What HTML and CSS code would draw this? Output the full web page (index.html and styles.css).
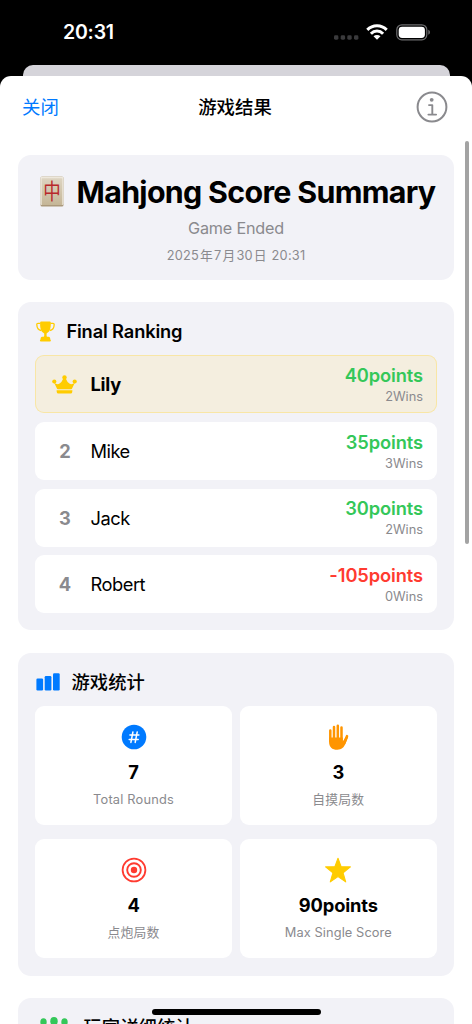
FILE: index.html
```html
<!DOCTYPE html>
<html lang="zh-CN">
<head>
<meta charset="utf-8">
<title>Mahjong Score Summary</title>
<link rel="stylesheet" href="styles.css">
</head>
<body>
<div class="phone">
  <div class="status-bar">
    <span class="clock">20:31</span>
    <div class="status-icons">
      <svg class="cellular" width="25" height="5" viewBox="0 0 25 5"><g fill="#3a3a3c"><rect x="0" y=".3" width="4.4" height="4.4" rx="1.4"/><rect x="6.7" y=".3" width="4.4" height="4.4" rx="1.4"/><rect x="13.3" y=".3" width="4.4" height="4.4" rx="1.4"/><rect x="20" y=".3" width="4.4" height="4.4" rx="1.4"/></g></svg>
      <svg class="wifi" width="22" height="16" viewBox="0 0 22 16"><g fill="none" stroke="#fff" stroke-width="3"><path d="M1.3 5.9Q5.3 1.8 11 1.8T20.7 5.9"/><path d="M4.9 9.7Q7.5 7 11 7t6.1 2.7"/></g><path d="M7.5 12.2Q9 10.9 11 10.9t3.5 1.3L11 15.8z" fill="#fff"/></svg>
      <svg class="battery" width="35" height="17" viewBox="0 0 35 17"><rect x=".8" y=".8" width="30" height="15" rx="5" fill="none" stroke="#6c6c6e" stroke-width="1.2"/><rect x="2.7" y="2.7" width="26.2" height="11.2" rx="3.4" fill="#fff"/><path d="M32.3 5.8c2.2.9 2.2 4.2 0 5z" fill="#6c6c6e"/></svg>
    </div>
  </div>
  <div class="back-sheet"></div>
  <main class="sheet">
    <header class="nav">
      <span class="close">关闭</span>
      <h1 class="nav-title">游戏结果</h1>
      <svg class="info" width="32" height="32" viewBox="0 0 32 32" fill="none" stroke="#8a8a8e"><circle cx="16" cy="16" r="14.4" stroke-width="2"/><circle cx="15.7" cy="8.8" r="1.9" fill="#8a8a8e" stroke="none"/><path d="M13 14.1h3.3v9.4M12.4 23.6h7.7" stroke-width="1.9" stroke-linecap="round" stroke-linejoin="round"/></svg>
    </header>
    <div class="content">
      <section class="card summary">
        <h2 class="title">
          <svg class="tile-icon" width="24" height="31" viewBox="0 0 24 31">
            <defs><linearGradient id="ivory" x1="0" y1="0" x2="0" y2="1"><stop offset="0" stop-color="#ddd4c1"/><stop offset="1" stop-color="#c5b697"/></linearGradient></defs>
            <rect x=".5" y=".5" width="23" height="30" rx="1.6" fill="#ab997b"/>
            <rect x=".5" y=".5" width="23" height="28.5" rx="1.6" fill="#eee8dc"/>
            <rect x="1.7" y="2.2" width="20.6" height="26.8" rx=".7" fill="url(#ivory)"/>
            <text class="tile-char" transform="translate(12 23.4) scale(.92 1.16)">中</text>
          </svg>
          <span class="title-text">Mahjong Score Summary</span>
        </h2>
        <p class="state">Game Ended</p>
        <p class="date">2025<span>年</span>7<span>月</span>30<span>日</span> 20:31</p>
      </section>

      <section class="card ranking">
        <h2 class="heading">
          <svg width="19" height="21" viewBox="0 0 19 21"><path d="M4.2 1.1Q4.3.4 5.2.4h8.5q.9 0 1 .7c.4 5.4-.5 9.8-4.1 11.3v2.5q0 .8.8.8h1.4q1.2 0 1.4 1.5v1.3q.7.1.7 1.1t-1 1h-9q-1 0-1-1t.7-1.1v-1.3q.2-1.5 1.4-1.5h1.4q.8 0 .8-.8v-2.5C4.7 10.9 3.8 6.5 4.2 1.1z" fill="#fc0"/><path d="M4.5 2.3H2Q.8 2.3.8 3.5c.1 3.6 1.5 5.6 4.5 6M14.500 2.300H17q1.200 0 1.200 1.200c-.1 3.600-1.500 5.600-4.500 6" fill="none" stroke="#fc0" stroke-width="1.3"/></svg>
          <span>Final Ranking</span>
        </h2>
        <ol class="players">
          <li class="player winner">
            <span class="rank"><svg width="25" height="19" viewBox="0 0 25 19" fill="#fc0"><circle cx="2.3" cy="6.5" r="2.1"/><circle cx="12.5" cy="2.4" r="2.2"/><circle cx="22.7" cy="6.5" r="2.1"/><path d="M2 7.5Q5.3 10.3 7.6 8.5 9.9 7 11.3 3.5h2.4Q15.1 7 17.4 8.5q2.3 1.800 5.600-1L20.300 13q-.3 1.200-1.300 1.200H6q-1 0-1.300-1.200zM4.600 15.300h15.800q-.1 3.200-1.300 3.200H5.900q-1.200 0-1.300-3.200z"/></svg></span>
            <span class="name">Lily</span>
            <span class="result"><b class="score">40points</b><small class="wins">2Wins</small></span>
          </li>
          <li class="player">
            <span class="rank">2</span><span class="name">Mike</span>
            <span class="result"><b class="score">35points</b><small class="wins">3Wins</small></span>
          </li>
          <li class="player">
            <span class="rank">3</span><span class="name">Jack</span>
            <span class="result"><b class="score">30points</b><small class="wins">2Wins</small></span>
          </li>
          <li class="player">
            <span class="rank">4</span><span class="name">Robert</span>
            <span class="result"><b class="score negative">-105points</b><small class="wins">0Wins</small></span>
          </li>
        </ol>
      </section>

      <section class="card stats">
        <h2 class="heading stats-heading">
          <svg width="24" height="18" viewBox="0 0 24 18" fill="#007aff"><rect x=".4" y="5.5" width="6.7" height="12" rx="1.2"/><rect x="8.7" y="3" width="6.7" height="14.5" rx="1.2"/><rect x="17" y=".3" width="6.7" height="17.2" rx="1.2"/></svg>
          <span>游戏统计</span>
        </h2>
        <div class="grid">
          <div class="stat">
            <svg width="26" height="26" viewBox="0 0 26 26"><circle cx="13" cy="13" r="12.3" fill="#007aff"/><path d="M11.9 8l-2 10.4M16.2 8l-2 10.4M8.9 11.1h9M8.2 15.4h9" stroke="#fff" stroke-width="1.5" stroke-linecap="round"/></svg>
            <b>7</b><span>Total Rounds</span>
          </div>
          <div class="stat">
            <svg width="26" height="26" viewBox="0 0 26 26" fill="none" stroke="#ff9500" stroke-linecap="round"><path d="M5.3 6.5V17M9 3v12M12.8 1.7V15M16.5 3.6V17" stroke-width="2.5"/><path d="M22 12.2l-2.8 7" stroke-width="2.6"/><path d="M4.05 13.5h13.7v4l3-4.6 2.4.2-2.4 6c-1.8 4.6-4.2 6.7-8.4 6.7-5.3 0-8.3-3-8.3-8.1z" fill="#ff9500" stroke="none"/></svg>
            <b>3</b><span>自摸局数</span>
          </div>
          <div class="stat">
            <svg width="26" height="26" viewBox="0 0 26 26" fill="none" stroke="#ff3b30"><circle cx="13" cy="13" r="11.4" stroke-width="1.8"/><circle cx="13" cy="13" r="6.8" stroke-width="1.9"/><circle cx="13" cy="13" r="3.2" fill="#ff3b30" stroke="none"/></svg>
            <b>4</b><span>点炮局数</span>
          </div>
          <div class="stat">
            <svg width="28" height="26" viewBox="0 0 28 26"><path d="M14 1.2l3.1 8.5 9.3.2-7.3 5.9 2.6 9.1L14 19.6l-7.7 5.3 2.6-9.1L1.6 9.9l9.3-.2z" fill="#fc0" stroke="#fc0" stroke-width="1.1" stroke-linejoin="round"/></svg>
            <b>90points</b><span class="max-label">Max Single Score</span>
          </div>
        </div>
      </section>

      <section class="card details">
        <h2 class="heading details-heading">
          <svg width="36" height="20" viewBox="0 0 36 20" fill="#34c759"><ellipse cx="7.5" cy="5" rx="3.2" ry="3.8"/><ellipse cx="18" cy="4.2" rx="3.7" ry="4.2"/><ellipse cx="28.5" cy="5" rx="3.2" ry="3.8"/><path d="M10 19c0-5 3-8.5 8-8.5s8 3.5 8 8.5zM1 17c0-4 2.5-6.5 6.5-6.5l2 .5L7 17zM35 17c0-4-2.5-6.5-6.5-6.5l-2 .5L29 17z"/></svg>
          <span>玩家详细统计</span>
        </h2>
      </section>
    </div>
  </main>
  <div class="scrollbar"></div>
  <div class="home-indicator"></div>
</div>
</body>
</html>
```
FILE: styles.css
```css
* { box-sizing: border-box; }
body { margin: 0; background: #000; font-family: Inter, "Noto Sans CJK SC", sans-serif; color: #000; }
h1, h2, p, ol { margin: 0; padding: 0; font-weight: inherit; }
svg { display: block; flex: none; }

.phone { position: relative; width: 472px; height: 1024px; overflow: hidden; background: #000; display: flex; flex-direction: column; }
.status-bar { height: 65px; flex: none; display: flex; justify-content: space-between; align-items: flex-start; padding: 20px 41px 0 63px; }
.clock { color: #fff; font-size: 19.5px; font-weight: 600; line-height: 25px; letter-spacing: -.2px; }
.status-icons { display: flex; align-items: flex-start; padding-top: 4px; }
.cellular { margin: 11px 7px 0 0; }
.wifi { margin-right: 8px; }
.back-sheet { flex: none; height: 11px; margin: 0 22.5px; background: #d5d4da; border-radius: 10px 10px 0 0; }

.sheet { flex: 1; min-height: 0; background: #fff; border-radius: 11px 11px 0 0; overflow: hidden; }
.nav { height: 79px; padding: 15px 24px 0 22px; display: grid; grid-template-columns: 1fr auto 1fr; align-items: start; }
.close { color: #007aff; font-size: 18.4px; line-height: 33px; }
.nav-title { font-size: 18.4px; font-weight: 500; line-height: 33px; }
.info { justify-self: end; }

.content { padding: 0 18px; display: flex; flex-direction: column; gap: 22.4px; }
.card { background: #f2f2f7; border-radius: 13px; flex: none; padding: 0 17.5px 0 17.4px; }
.summary { height: 125px; text-align: center; padding: 16.5px 0 0; }
.title { display: flex; justify-content: center; gap: 13px; height: 40px; align-items: center; padding-left: 3px; }
.title-text { font-size: 30.4px; font-weight: 700; line-height: 38px; letter-spacing: -.7px; white-space: nowrap; }
.tile-char { font-family: "Noto Sans CJK SC", sans-serif; font-size: 19px; font-weight: 400; fill: #b8282b; text-anchor: middle; }
.state { margin-top: 5.5px; font-size: 16.2px; line-height: 22px; color: #8a8a8e; letter-spacing: -.2px; }
.date { margin-top: 8px; font-size: 12.8px; line-height: 18px; color: #8a8a8e; letter-spacing: .2px; }
.date span { margin: 0 1px; }

.ranking { height: 328px; }
.heading { display: flex; align-items: center; gap: 11px; height: 53px; padding: 5px 0 0 1px; font-size: 18.3px; font-weight: 600; letter-spacing: -.15px; }
.players { list-style: none; display: grid; gap: 8.7px; }
.player { height: 58px; border-radius: 9px; background: #fff; display: flex; align-items: center; padding: 0 13.5px 0 16.5px; }
.winner { background: #f4eedf; box-shadow: inset 0 0 0 1px #f8e6a6; }
.rank { width: 26px; margin-right: 12.5px; display: flex; justify-content: center; color: #8a8a8e; font-size: 18.3px; font-weight: 700; }
.name { flex: 1; font-size: 18.3px; letter-spacing: -.45px; }
.winner .name { font-weight: 700; letter-spacing: -.2px; }
.result { display: flex; flex-direction: column; align-items: flex-end; }
.score { font-size: 18.3px; line-height: 23px; font-weight: 600; color: #34c759; letter-spacing: -.1px; }
.negative { color: #ff3b30; }
.wins { font-size: 12.8px; line-height: 18px; color: #8a8a8e; padding-top: 1px; margin-bottom: -1px; }

.stats { height: 323px; }
.stats-heading span { font-weight: 500; letter-spacing: .1px; margin-top: -2px; }
.grid { display: grid; grid-template-columns: 1fr 1fr; column-gap: 8.5px; row-gap: 14px; }
.stat { height: 119px; border-radius: 9px; background: #fff; display: flex; flex-direction: column; align-items: center; padding-top: 18px; }
.stat b { margin-top: 9px; font-size: 18.3px; line-height: 26px; font-weight: 700; letter-spacing: -.1px; }
.stat span { margin-top: 6px; font-size: 12.8px; line-height: 18px; color: #8a8a8e; letter-spacing: .2px; }
.stat .max-label { letter-spacing: .1px; }
.details { height: 200px; }
.details-heading { gap: 11px; padding-left: 1px; }
.details-heading span { font-weight: 500; letter-spacing: .1px; margin-top: -2px; }

.scrollbar { position: absolute; left: 465px; top: 141px; width: 3.5px; height: 403px; border-radius: 2px; background: #a3a3a3; }
.home-indicator { position: absolute; left: 152px; top: 1009px; width: 169px; height: 6px; border-radius: 3px; background: #000; }
```
